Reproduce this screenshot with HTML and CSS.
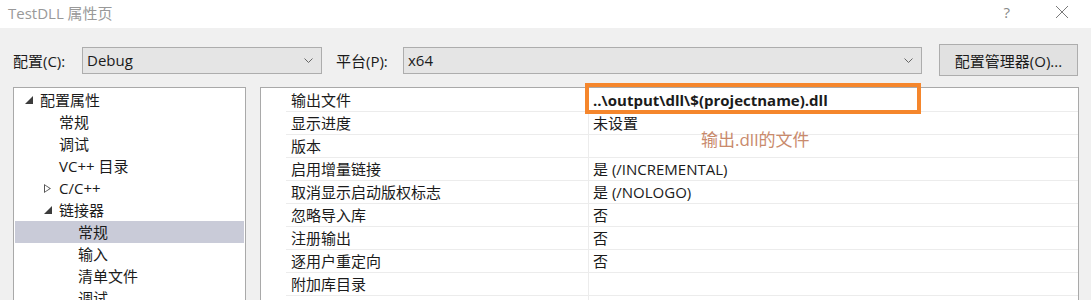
FILE: index.html
```html
<!DOCTYPE html>
<html lang="zh-CN">
<head>
  <meta charset="UTF-8">
  <title>TestDLL 属性页</title>
  <link rel="stylesheet" href="styles.css">
</head>
<body>
  <div class="page">
    <div class="titlebar">
      <span class="title">TestDLL 属性页</span>
      <span class="help">?</span>
      <svg class="close" width="14" height="14" viewBox="0 0 14 14">
        <path d="M1 1 L13 13 M13 1 L1 13" stroke="#7a7a7a" stroke-width="1" fill="none"/>
      </svg>
    </div>

    <div class="toolbar">
      <span class="lbl lbl-config">配置(C):</span>
      <div class="combo combo-config">
        <span>Debug</span>
        <svg class="chev" width="9" height="5" viewBox="0 0 9 5"><polyline points="0.5,0.5 4.5,4.5 8.5,0.5" fill="none" stroke="#666" stroke-width="1"/></svg>
      </div>
      <span class="lbl lbl-platform">平台(P):</span>
      <div class="combo combo-platform">
        <span>x64</span>
        <svg class="chev" width="9" height="5" viewBox="0 0 9 5"><polyline points="0.5,0.5 4.5,4.5 8.5,0.5" fill="none" stroke="#666" stroke-width="1"/></svg>
      </div>
      <button class="btn">配置管理器(O)...</button>
    </div>

    <div class="main">
      <ul class="tree">
        <li class="lv0"><span class="tri open"></span>配置属性</li>
        <li class="lv1">常规</li>
        <li class="lv1">调试</li>
        <li class="lv1">VC++ 目录</li>
        <li class="lv1"><span class="tri closed"></span>C/C++</li>
        <li class="lv1"><span class="tri open"></span>链接器</li>
        <li class="lv2 selected">常规</li>
        <li class="lv2">输入</li>
        <li class="lv2">清单文件</li>
        <li class="lv2">调试</li>
      </ul>

      <div class="grid">
        <div class="row first"><div class="name">输出文件</div><div class="value bold">..\output\dll\$(projectname).dll</div></div>
        <div class="row"><div class="name">显示进度</div><div class="value">未设置</div></div>
        <div class="row"><div class="name">版本</div><div class="value"></div></div>
        <div class="row"><div class="name">启用增量链接</div><div class="value">是 (/INCREMENTAL)</div></div>
        <div class="row"><div class="name">取消显示启动版权标志</div><div class="value">是 (/NOLOGO)</div></div>
        <div class="row"><div class="name">忽略导入库</div><div class="value">否</div></div>
        <div class="row"><div class="name">注册输出</div><div class="value">否</div></div>
        <div class="row"><div class="name">逐用户重定向</div><div class="value">否</div></div>
        <div class="row"><div class="name">附加库目录</div><div class="value"></div></div>
        <div class="row"><div class="name"></div><div class="value"></div></div>
      </div>
    </div>

    <!-- annotation drawn over the grid -->
    <div class="mark"></div>
    <div class="note">输出.dll的文件</div>
  </div>
</body>
</html>
```

FILE: styles.css
```css
body {
  margin: 0;
  font-family: "Open Sans", "Noto Sans CJK SC", sans-serif;
  font-size: 15px;
  color: #1b1b1b;
}

.page {
  position: relative;
  width: 1091px;
  height: 300px;
  overflow: hidden;
  background: #f0f0f0;
}

.titlebar {
  height: 28px;
  background: #ffffff;
  display: flex;
  align-items: center;
  padding-left: 8px;
}

.title {
  color: #999999;
  font-size: 15px;
  flex: 1;
  margin-top: -4px;
}

.help {
  color: #888;
  font-size: 15px;
  margin-right: 45px;
  margin-top: -4px;
}

.close {
  margin-right: 22px;
  margin-top: -4px;
}

/* barra de configuracion */
.toolbar {
  display: flex;
  align-items: center;
  height: 32px;
  margin-top: 16px;
  padding-left: 13px;
}

.lbl-config {
  width: 69px;
}

.lbl-platform {
  width: 67px;
  margin-left: 14px;
}

.combo {
  box-sizing: border-box;
  height: 27px;
  background: #e5e5e5;
  border: 1px solid #adadad;
  display: flex;
  align-items: center;
  padding: 0 8px 0 4px;
}

.combo span {
  flex: 1;
}

.combo-config {
  width: 240px;
}

.combo-platform {
  width: 519px;
}

.btn {
  box-sizing: border-box;
  width: 139px;
  height: 32px;
  margin-left: 17px;
  background: #e1e1e1;
  border: 1px solid #adadad;
  font-family: inherit;
  font-size: 15px;
  color: #1b1b1b;
  padding: 0;
}

/* paneles */
.main {
  display: flex;
  margin-top: 11px;
  padding-left: 13px;
}

.tree {
  box-sizing: border-box;
  list-style: none;
  margin: 0;
  padding: 1px 1px 0 1px;
  width: 233px;
  height: 220px;
  background: #ffffff;
  border: 1px solid #a9a9a9;
  border-bottom: none;
}

.tree li {
  position: relative;
  height: 22px;
  line-height: 22px;
  white-space: nowrap;
}

.lv0 { padding-left: 25px; }
.lv1 { padding-left: 44px; }
.lv2 { padding-left: 63px; }

.tree li.selected {
  background: #c9cbd8;
}

.tri {
  position: absolute;
  top: 7px;
  width: 8px;
  height: 8px;
}

.lv0 .tri { left: 10px; }
.lv1 .tri { left: 29px; }

.tri.open {
  background: #3c3c3c;
  clip-path: polygon(100% 0, 100% 100%, 0 100%);
}

.tri.closed {
  width: 7px;
  height: 9px;
  top: 7px;
  background: linear-gradient(#555, #555);
  clip-path: polygon(0 0, 100% 50%, 0 100%, 0 0, 1px 1.5px, 1px 7.5px, 5.5px 4.5px, 1px 1.5px);
}

.grid {
  box-sizing: border-box;
  width: 819px;
  margin-left: 14px;
  height: 220px;
  background: #ffffff;
  border: 1px solid #a9a9a9;
  border-bottom: none;
  padding-left: 25px;
  padding-top: 1px;
}

.row {
  display: flex;
  height: 23px;
  line-height: 22px;
  border-bottom: 1px solid #ececec;
  box-sizing: border-box;
}

.name {
  width: 303px;
  padding-left: 5px;
  border-right: 1px solid #ececec;
  box-sizing: border-box;
}

.value {
  padding-left: 4px;
  flex: 1;
}

.bold {
  font-weight: bold;
}

/* anotacion */
.mark {
  position: absolute;
  left: 585px;
  top: 83px;
  width: 336px;
  height: 31px;
  box-sizing: border-box;
  border: 4px solid #f5862c;
}

.note {
  position: absolute;
  left: 701px;
  top: 126px;
  font-size: 17px;
  color: #c98a6c;
}
```
